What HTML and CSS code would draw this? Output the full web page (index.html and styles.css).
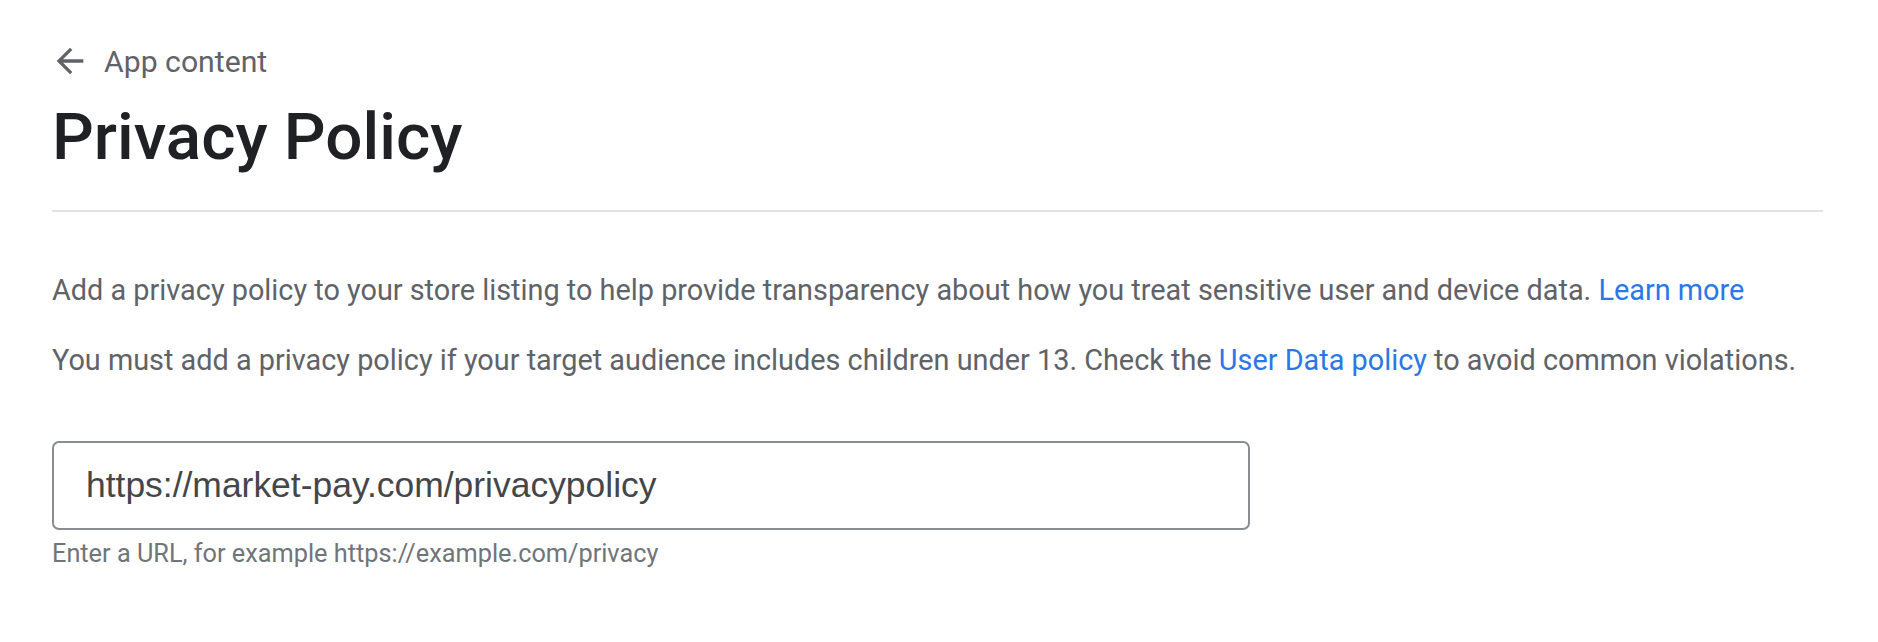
FILE: index.html
```html
<!DOCTYPE html>
<html lang="en">
<head>
  <meta charset="UTF-8" />
  <meta name="viewport" content="width=device-width, initial-scale=1.0"/>
  <title>Privacy Policy</title>
  <link rel="stylesheet" href="styles.css">
</head>
<body>

  <div class="page">
    <a class="crumb" href="#">
      <svg class="crumb-icon" viewBox="0 0 24 24" width="40" height="40">
        <path d="M20 11H7.83l5.59-5.59L12 4l-8 8 8 8 1.41-1.41L7.83 13H20v-2z"/>
      </svg>
      <span>App content</span>
    </a>

    <h1>Privacy Policy</h1>

    <hr class="divider">

    <p class="intro">
      Add a privacy policy to your store listing to help provide transparency about how you treat sensitive user and device data.
      <a href="#">Learn more</a>
    </p>
    <p class="intro intro-second">
      You must add a privacy policy if your target audience includes children under 13. Check the
      <a href="#">User Data policy</a> to avoid common violations.
    </p>

    <div class="field">
      <input class="url-input" type="text" value="https://market-pay.com/privacypolicy">
      <div class="hint">Enter a URL, for example https://example.com/privacy</div>
    </div>
  </div>

</body>
</html>
```

FILE: styles.css
```css
body {
  margin: 0;
  background-color: #ffffff;
  font-family: Roboto, "Liberation Sans", sans-serif;
}

.page {
  padding: 41px 55px 0 52px;
}

.crumb {
  display: flex;
  align-items: center;
  height: 40px;
  color: #5f6368;
  text-decoration: none;
  font-size: 30.2px;
}

.crumb-icon {
  margin-left: -2px;
  margin-right: 14px;
  fill: #5f6368;
}

h1 {
  margin: 18px 0 0;
  font-size: 65.6px;
  line-height: 76px;
  font-weight: 500;
  color: #202124;
}

.divider {
  margin: 35px 0 0;
  border: none;
  height: 2px;
  background-color: #e1e1e6;
}

.intro {
  margin: 60px 0 0;
  font-size: 28.85px;
  line-height: 36px;
  color: #5f6368;
}

.intro-second {
  margin-top: 34px;
}

.intro a {
  color: #2a78e6;
  text-decoration: none;
}

.field {
  margin-top: 63px;
}

.url-input {
  display: block;
  box-sizing: border-box;
  width: 1198px;
  height: 89px;
  margin: 0;
  padding: 0 32px;
  border: 2px solid #898c91;
  border-radius: 7px;
  font-family: "Liberation Sans", Arial, sans-serif;
  font-size: 35.45px;
  color: #444649;
  background: #ffffff;
  outline: none;
}

.hint {
  margin-top: 9px;
  font-size: 25.3px;
  line-height: 30px;
  color: #70757a;
}
```
